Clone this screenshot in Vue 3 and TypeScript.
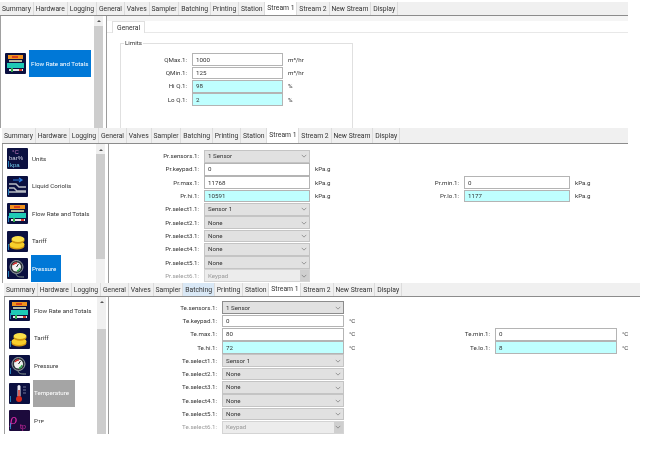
<script setup lang="ts">
type Kind = 'input' | 'alarm' | 'select' | 'focus' | 'disabled'

interface Field {
  label: string
  value: string
  kind: Kind
  unit?: string
}

interface Row extends Field {
  side?: Field
}

interface NavItem {
  icon: string
  name: string
  selected?: boolean
}

const tabs = ['Summary', 'Hardware', 'Logging', 'General', 'Valves', 'Sampler', 'Batching', 'Printing', 'Station', 'Stream 1', 'Stream 2', 'New Stream', 'Display']

function buildRows(p: string, max: string, hi: string, min: string, lo: string, unit: string): Row[] {
  return [
    { label: `${p}.sensors.1:`, value: '1 Sensor', kind: p === 'Te' ? 'focus' : 'select' },
    { label: `${p}.keypad.1:`, value: '0', kind: 'input', unit },
    { label: `${p}.max.1:`, value: max, kind: 'input', unit, side: { label: `${p}.min.1:`, value: min, kind: 'input', unit } },
    { label: `${p}.hi.1:`, value: hi, kind: 'alarm', unit, side: { label: `${p}.lo.1:`, value: lo, kind: 'alarm', unit } },
    { label: `${p}.select1.1:`, value: 'Sensor 1', kind: 'select' },
    { label: `${p}.select2.1:`, value: 'None', kind: 'select' },
    { label: `${p}.select3.1:`, value: 'None', kind: 'select' },
    { label: `${p}.select4.1:`, value: 'None', kind: 'select' },
    { label: `${p}.select5.1:`, value: 'None', kind: 'select' },
    { label: `${p}.select6.1:`, value: 'Keypad', kind: 'disabled' },
  ]
}

const limits: Field[] = [
  { label: 'QMax.1:', value: '1000', kind: 'input', unit: 'm³/hr' },
  { label: 'QMin.1:', value: '125', kind: 'input', unit: 'm³/hr' },
  { label: 'Hi Q.1:', value: '98', kind: 'alarm', unit: '%' },
  { label: 'Lo Q.1:', value: '2', kind: 'alarm', unit: '%' },
]

const panels = [
  {
    id: 'p2',
    hoverTab: '',
    nav: [
      { icon: 'units', name: 'Units' },
      { icon: 'coriolis', name: 'Liquid Coriolis' },
      { icon: 'flow', name: 'Flow Rate and Totals' },
      { icon: 'tariff', name: 'Tariff' },
      { icon: 'pressure', name: 'Pressure', selected: true },
    ] as NavItem[],
    rows: buildRows('Pr', '11768', '10591', '0', '1177', 'kPa.g'),
  },
  {
    id: 'p3',
    hoverTab: 'Batching',
    nav: [
      { icon: 'flow', name: 'Flow Rate and Totals' },
      { icon: 'tariff', name: 'Tariff' },
      { icon: 'pressure', name: 'Pressure' },
      { icon: 'temp', name: 'Temperature', selected: true },
      { icon: 'rho', name: 'Pᴛᴘ' },
    ] as NavItem[],
    rows: buildRows('Te', '80', '72', '0', '8', '°C'),
  },
]
</script>

<template>
  <div class="page">
    <!-- panel 1 -->
    <section class="panel p1">
      <div class="tabbar">
        <span v-for="t in tabs" :key="t" class="tab" :class="{ active: t === 'Stream 1' }">{{ t }}</span>
      </div>
      <div class="body">
        <div class="nav">
          <div class="nav-item">
            <svg class="icon" viewBox="0 0 21 21">
              <rect width="21" height="21" rx="1" fill="#0b1040" />
              <rect x="3" y="2" width="15" height="4" fill="#f0921e" />
              <rect x="7" y="3" width="6" height="2" fill="#d8401c" />
              <rect x="4" y="7" width="13" height="2" fill="#b9b9a0" />
              <rect x="2" y="10" width="17" height="5" fill="#1fc9b6" />
              <rect x="4" y="16" width="14" height="2" fill="#e8e8e8" />
              <rect x="6" y="15" width="2" height="4" fill="#2fa84a" />
              <rect x="14" y="16" width="3" height="2" fill="#d23a2a" />
            </svg>
            <span class="nav-name selected">Flow Rate and Totals</span>
          </div>
        </div>
        <div class="scroll"><span class="arrow"></span><span class="thumb"></span></div>
        <div class="content">
          <div class="subtabs"><span class="subtab">General</span></div>
          <fieldset class="limits">
            <legend>Limits</legend>
            <div class="limit-rows">
              <template v-for="f in limits" :key="f.label">
                <span class="label">{{ f.label }}</span>
                <div class="box" :class="f.kind">{{ f.value }}</div>
                <span class="unit">{{ f.unit }}</span>
              </template>
            </div>
          </fieldset>
        </div>
      </div>
    </section>

    <!-- panels 2 and 3 -->
    <section v-for="panel in panels" :key="panel.id" class="panel" :class="panel.id">
      <div class="tabbar">
        <span
          v-for="t in tabs"
          :key="t"
          class="tab"
          :class="{ active: t === 'Stream 1', hover: t === panel.hoverTab }"
        >{{ t }}</span>
      </div>
      <div class="body">
        <div class="nav">
          <div v-for="item in panel.nav" :key="item.name" class="nav-item">
            <svg class="icon" viewBox="0 0 21 21">
              <rect width="21" height="21" rx="1" :fill="item.icon === 'rho' ? '#1c0a3c' : '#0b1040'" />
              <g v-if="item.icon === 'units'" font-family="'Liberation Sans', sans-serif" font-size="6">
                <text x="5" y="6" fill="#c77ac0">°C</text>
                <text x="2" y="12" fill="#d8d8e8">bar%</text>
                <text x="3" y="19" fill="#6cc8e8">kpa</text>
              </g>
              <g v-else-if="item.icon === 'coriolis'">
                <path d="M6 4h8m-2-2 3 2-3 2" stroke="#2f7fe0" stroke-width="1.2" fill="none" />
                <path d="M2 8h7l3 3h7M2 12h5l3 3h9M2 16h17" stroke="#b8bcc4" stroke-width="1.4" fill="none" />
              </g>
              <g v-else-if="item.icon === 'flow'">
                <rect x="3" y="2" width="15" height="4" fill="#f0921e" />
                <rect x="7" y="3" width="6" height="2" fill="#d8401c" />
                <rect x="4" y="7" width="13" height="2" fill="#b9b9a0" />
                <rect x="2" y="10" width="17" height="5" fill="#1fc9b6" />
                <rect x="4" y="16" width="14" height="2" fill="#e8e8e8" />
                <rect x="6" y="15" width="2" height="4" fill="#2fa84a" />
                <rect x="14" y="16" width="3" height="2" fill="#d23a2a" />
              </g>
              <g v-else-if="item.icon === 'tariff'">
                <ellipse cx="10" cy="15" rx="7.5" ry="3.6" fill="#d69a10" />
                <ellipse cx="10" cy="13.5" rx="7.5" ry="3.4" fill="#f7cf2c" />
                <ellipse cx="11" cy="9.5" rx="6.5" ry="3.2" fill="#cf960f" />
                <ellipse cx="11" cy="8" rx="6.5" ry="3" fill="#fbe04a" />
              </g>
              <g v-else-if="item.icon === 'pressure'">
                <path d="M9 16c1 3 3 3 8 3" stroke="#8a9a90" stroke-width="1" fill="none" />
                <circle cx="9.500" cy="9" r="6.500" fill="#2c3338" stroke="#9aa4a8" stroke-width="1" />
                <circle cx="9.500" cy="9" r="4.500" fill="#f2f2f2" />
                <path d="M6 7a4 4 0 0 1 4-2" stroke="#d22a2a" stroke-width="1.4" fill="none" />
                <path d="M13 10a4 4 0 0 1-3 3" stroke="#2fa84a" stroke-width="1.4" fill="none" />
                <path d="M9.500 9l2-3" stroke="#222" stroke-width="1" />
              </g>
              <g v-else-if="item.icon === 'temp'">
                <rect x="8.500" y="2" width="3" height="12" rx="1.500" fill="#e8e8f0" />
                <rect x="9.300" y="7" width="1.400" height="8" fill="#d42a1c" />
                <circle cx="10" cy="16" r="3" fill="#d42a1c" />
                <path d="M14 4h3M14 7h3M14 10h3" stroke="#8b8fb0" stroke-width="0.8" />
              </g>
              <g v-else>
                <text x="1" y="14" font-family="'Liberation Serif', serif" font-style="italic" font-size="15" fill="#d62aa6">ρ</text>
                <text x="11" y="19" font-family="'Liberation Sans', sans-serif" font-size="7" fill="#d62aa6">tp</text>
              </g>
              <rect x="1" y="13" width="0.800" height="6" fill="#2a9ad8" />
            </svg>
            <span class="nav-name" :class="{ selected: item.selected }">{{ item.name }}</span>
          </div>
        </div>
        <div class="scroll"><span class="arrow"></span><span class="thumb"></span></div>
        <div class="content grid">
          <template v-for="r in panel.rows" :key="r.label">
            <span class="label">{{ r.label }}</span>
            <div class="box" :class="r.kind">
              {{ r.value }}
              <svg v-if="r.kind !== 'input' && r.kind !== 'alarm'" class="chev" viewBox="0 0 8 5">
                <path d="M1 1l3 3 3-3" fill="none" stroke="#666" stroke-width="0.8" />
              </svg>
            </div>
            <span class="unit">{{ r.unit }}</span>
            <template v-if="r.side">
              <span class="label">{{ r.side.label }}</span>
              <div class="box" :class="r.side.kind">{{ r.side.value }}</div>
              <span class="unit">{{ r.side.unit }}</span>
            </template>
            <span v-else class="filler"></span>
          </template>
        </div>
      </div>
    </section>
  </div>
</template>

<style scoped>
.page {
  width: 652px;
  height: 451px;
  padding-top: 2px;
  box-sizing: border-box;
  background: #fff;
  font-family: Roboto, "Liberation Sans", sans-serif;
  font-size: 6.2px;
  color: #333;
  overflow: hidden;
  filter: blur(0.35px);
}

.panel {
  display: flex;
  flex-direction: column;
  overflow: hidden;
}

.p1 {
  width: 628px;
  height: 126px;
}

.p2 {
  width: 626px;
  height: 155px;
  margin-left: 2px;
}

.p3 {
  width: 636px;
  height: 151px;
  margin-left: 4px;
}

.tabbar {
  display: flex;
  flex: none;
  height: 13px;
  align-items: stretch;
  font-size: 6.8px;
  background: #f0f0f0;
  border-bottom: 1px solid #8c8c8c;
}

.p2 .tabbar {
  height: 15px;
}

.tab {
  display: flex;
  align-items: center;
  padding: 1px 1.900px 0;
  border-right: 1px solid #dcdcdc;
  white-space: nowrap;
}

.tab.active {
  background: #fff;
  padding-top: 0;
  padding-bottom: 1px;
}

.tab.hover {
  background: #d9e8f6;
}

.body {
  flex: 1;
  display: flex;
  min-height: 0;
}

.nav {
  width: 94px;
  flex: none;
  box-sizing: border-box;
  padding-left: 4px;
  background: #fff;
  border-left: 1px solid #a0a0a0;
  overflow: hidden;
}

.p1 .nav {
  padding-top: 34px;
}

.p2 .nav {
  padding-top: 1px;
}

.p3 .nav {
  width: 93px;
}

.nav-item {
  display: flex;
  align-items: center;
  gap: 3px;
  height: 27.500px;
}

.icon {
  width: 21px;
  height: 21px;
  flex: none;
}

.nav-name {
  display: flex;
  align-items: center;
  height: 27px;
  padding: 0 1px;
  white-space: nowrap;
}

.nav-name.selected {
  background: #0078d7;
  color: #fff;
}

.p1 .nav-name.selected {
  padding: 0 3px 0 2px;
}

.p2 .nav-name.selected {
  padding-right: 5px;
}

.p3 .nav-name.selected {
  background: #a5a5a5;
  padding-right: 6px;
}

.scroll {
  width: 9px;
  flex: none;
  display: flex;
  flex-direction: column;
  background: #f0f0f0;
}

.arrow {
  display: block;
  flex: none;
  width: 0;
  height: 0;
  margin: 4px auto;
  border: 2px solid transparent;
  border-top: 0;
  border-bottom: 2px solid #555;
}

.thumb {
  display: block;
  height: 105px;
  background: #cdcdcd;
}

.p2 .arrow {
  margin: 5px auto 3px;
}

.p3 .arrow {
  margin-bottom: 5px;
}

.p3 .thumb {
  margin-top: 21px;
}

.content {
  flex: 1;
  margin-left: 3px;
  border-left: 1px solid #9c9c9c;
  background: #fff;
  min-width: 0;
}

.p3 .content {
  margin-left: 2px;
}

.subtabs {
  height: 17px;
  box-sizing: border-box;
  padding-top: 5px;
  background: linear-gradient(#f5f5f5 5px, #fff 5px);
  border-bottom: 1px solid #e8e8e8;
}

.subtab {
  display: inline-flex;
  align-items: center;
  height: 12px;
  padding: 0 4px;
  font-size: 6.8px;
  background: #fff;
  border: 1px solid #e0e0e0;
  border-bottom: 0;
  box-sizing: border-box;
  margin-left: 5px;
}

.limits {
  width: 233px;
  height: 100px;
  box-sizing: border-box;
  margin: 6px 0 0 13px;
  padding: 6px 0 0;
  border: 1px solid #e0e0e0;
  min-inline-size: 0;
}

.limits legend {
  padding: 0 1px;
  margin-left: 3px;
}

.limit-rows {
  display: grid;
  grid-template-columns: 66px 91px 50px;
  grid-auto-rows: 13.300px;
  column-gap: 5px;
}

.grid {
  display: grid;
  align-content: start;
  grid-auto-rows: 13.300px;
  column-gap: 5px;
  padding-top: 5.500px;
}

.p2 .grid {
  grid-template-columns: 90px 106px 40px 99px 106px 40px;
}

.p3 .grid {
  grid-template-columns: 108px 122px 40px 96px 122px 20px;
  padding-top: 4px;
}

.filler {
  grid-column: span 3;
}

.label {
  align-self: center;
  text-align: right;
  white-space: nowrap;
}

.unit {
  align-self: center;
  white-space: nowrap;
}

.box {
  position: relative;
  box-sizing: border-box;
  margin: 0.300px 0;
  padding-left: 3px;
  display: flex;
  align-items: center;
  border: 1px solid #b4b4b4;
  background: #fff;
  color: #333;
  white-space: nowrap;
}

.box.alarm {
  background: #bfffff;
}

.box.select,
.box.focus {
  background: #e1e1e1;
  border-color: #c4c4c4;
}

.box.focus {
  border-color: #8c8c8c;
}

.box.disabled {
  background: #ececec;
  border-color: #d4d4d4;
  color: #9a9a9a;
}

.box.disabled::after {
  content: "";
  position: absolute;
  top: 0;
  right: 0;
  bottom: 0;
  width: 9px;
  background: #cfcfcf;
}

.chev {
  position: absolute;
  z-index: 1;
  right: 2px;
  top: 3.500px;
  width: 6px;
  height: 4px;
}

.grid .label:has(+ .box.disabled) {
  color: #999;
}
</style>
